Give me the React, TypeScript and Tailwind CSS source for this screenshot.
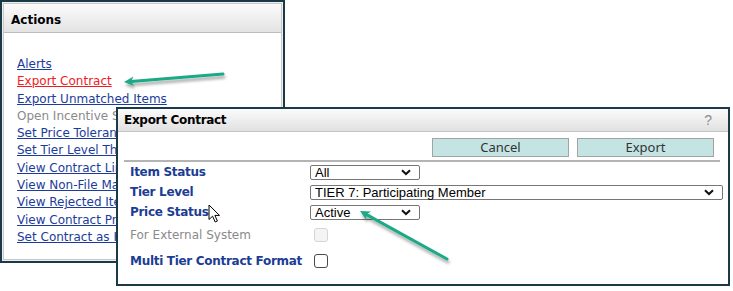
import React from "react"

const links = [
  { label: "Alerts", tone: "link" },
  { label: "Export Contract", tone: "active" },
  { label: "Export Unmatched Items", tone: "link" },
  { label: "Open Incentive Statements", tone: "disabled" },
  { label: "Set Price Tolerance", tone: "link" },
  { label: "Set Tier Level Thresholds", tone: "link" },
  { label: "View Contract Lines", tone: "link" },
  { label: "View Non-File Matches", tone: "link" },
  { label: "View Rejected Items", tone: "link" },
  { label: "View Contract Pricing", tone: "link" },
  { label: "Set Contract as Hidden", tone: "link" },
]

const toneClass: Record<string, string> = {
  link: "text-[#1b3c9c] underline",
  active: "text-[#ee1c24] underline",
  disabled: "text-[#8a8a8a]",
}

function Chevron() {
  return (
    <svg width="10" height="7" viewBox="0 0 10 7" className="shrink-0">
      <path d="M1 1.2 L5 5 L9 1.2" fill="none" stroke="#111" strokeWidth="2" />
    </svg>
  )
}

function Select({ value, width }: { value: string; width: string }) {
  return (
    <div
      className={`${width} h-[15px] flex items-center justify-between pl-[4px] pr-[8px] bg-white border border-[#767676] rounded-[2px] text-[13px] leading-none font-normal tracking-normal text-black font-['Liberation_Sans',Arial,sans-serif]`}
    >
      <span>{value}</span>
      <Chevron />
    </div>
  )
}

function Arrow({ x1, y1, x2, y2 }: { x1: number; y1: number; x2: number; y2: number }) {
  const a = Math.atan2(y1 - y2, x1 - x2)
  const len = 11
  const spread = 0.45
  const p1 = [x2 + len * Math.cos(a + spread), y2 + len * Math.sin(a + spread)]
  const p2 = [x2 + len * Math.cos(a - spread), y2 + len * Math.sin(a - spread)]
  const bx = x2 + 7 * Math.cos(a)
  const by = y2 + 7 * Math.sin(a)
  return (
    <g>
      <line x1={x1} y1={y1} x2={bx} y2={by} stroke="#1aa985" strokeWidth="3" strokeLinecap="round" />
      <polygon points={`${x2},${y2} ${p1[0]},${p1[1]} ${bx},${by} ${p2[0]},${p2[1]}`} fill="#1aa985" />
    </g>
  )
}

export default function App() {
  return (
    <div className="relative w-[733px] h-[291px] bg-white overflow-hidden font-['DejaVu_Sans',Verdana,sans-serif]">
      {/* Actions panel */}
      <div className="w-[285px] h-[263px] border-2 border-[#1b3a48] bg-[#eeeeee] p-px">
        <div className="h-full border border-[#c9c9c9] bg-white flex flex-col">
          <div className="h-[29px] flex items-center px-[7px] pt-[3px] bg-gradient-to-b from-[#fbfbfb] to-[#e3e3e3] border-b border-[#bdbdbd] text-[12px] font-bold text-black">
            Actions
          </div>
          <div className="pt-[23px] pl-[13px] flex flex-col text-[12px] leading-[17.3px] whitespace-nowrap">
            {links.map((l) => (
              <span key={l.label} className={toneClass[l.tone]}>
                {l.label}
              </span>
            ))}
          </div>
        </div>
      </div>

      {/* Export Contract dialog */}
      <div className="absolute left-[116px] top-[107px] w-[614px] h-[179px] border-2 border-[#1b3a48] bg-white flex flex-col">
        <div className="h-[23px] shrink-0 flex items-center justify-between pl-[6px] pr-[16px] bg-gradient-to-b from-[#fbfbfb] to-[#e1e1e1] border-b border-[#c4c4c4]">
          <span className="text-[12px] font-bold tracking-[-0.3px] text-black">Export Contract</span>
          <span className="text-[14px] text-[#8c8c8c] font-['Liberation_Sans',Arial,sans-serif]">?</span>
        </div>
        <div className="pl-[6px] pr-[8px]">
          <div className="flex justify-end gap-[8px] pt-[6px] pb-[3px] pr-[6px] border-b-2 border-[#b4b4b4]">
            <div className="w-[137px] h-[19px] flex items-center justify-center bg-[#c3e4e3] border border-[#a3a3a3] text-[13px] text-[#333] font-['Noto_Sans',sans-serif]">
              Cancel
            </div>
            <div className="w-[137px] h-[19px] flex items-center justify-center bg-[#c3e4e3] border border-[#a3a3a3] text-[13px] text-[#333] font-['Noto_Sans',sans-serif]">
              Export
            </div>
          </div>
          <div className="grid grid-cols-[180px_1fr] pl-[6px] text-[12px] font-bold tracking-[-0.3px] text-[#1c3d94] items-center">
            <div className="h-[20px] flex items-center">Item Status</div>
            <div className="h-[20px] flex items-center">
              <Select value="All" width="w-[110px]" />
            </div>
            <div className="h-[20px] flex items-center">Tier Level</div>
            <div className="h-[20px] flex items-center">
              <Select value="TIER 7: Participating Member" width="w-[413px]" />
            </div>
            <div className="h-[20px] flex items-center">Price Status</div>
            <div className="h-[20px] flex items-center">
              <Select value="Active" width="w-[110px]" />
            </div>
            <div className="h-[25px] flex items-center font-normal tracking-normal text-[#8a8a8a]">For External System</div>
            <div className="h-[25px] flex items-center pl-[4px]">
              <div className="w-[14px] h-[14px] rounded-[3px] border border-[#d6d6d6] bg-[#f4f4f4]" />
            </div>
            <div className="h-[27px] flex items-center">Multi Tier Contract Format</div>
            <div className="h-[27px] flex items-center pl-[4px]">
              <div className="w-[14px] h-[14px] rounded-[3px] border border-[#4a4a4a] bg-white" />
            </div>
          </div>
        </div>
      </div>

      {/* annotation arrows */}
      <svg className="absolute left-0 top-0 pointer-events-none" width="733" height="291">
        <defs>
          <filter id="sh" x="-20%" y="-50%" width="140%" height="200%">
            <feDropShadow dx="1" dy="3" stdDeviation="1.6" floodColor="#000" floodOpacity="0.35" />
          </filter>
        </defs>
        <g filter="url(#sh)">
          <Arrow x1={223} y1={74} x2={124} y2={82} />
          <Arrow x1={447} y1={259} x2={360} y2={211} />
        </g>
      </svg>

      {/* mouse cursor */}
      <svg className="absolute left-[208px] top-[204px]" width="13" height="20" viewBox="0 0 13 20">
        <path
          d="M1 1 L1 15.5 L4.6 12.2 L7.2 18 L9.4 17 L6.9 11.4 L11.5 11.4 Z"
          fill="#fff"
          stroke="#000"
          strokeWidth="1"
          strokeLinejoin="round"
        />
      </svg>
    </div>
  )
}
